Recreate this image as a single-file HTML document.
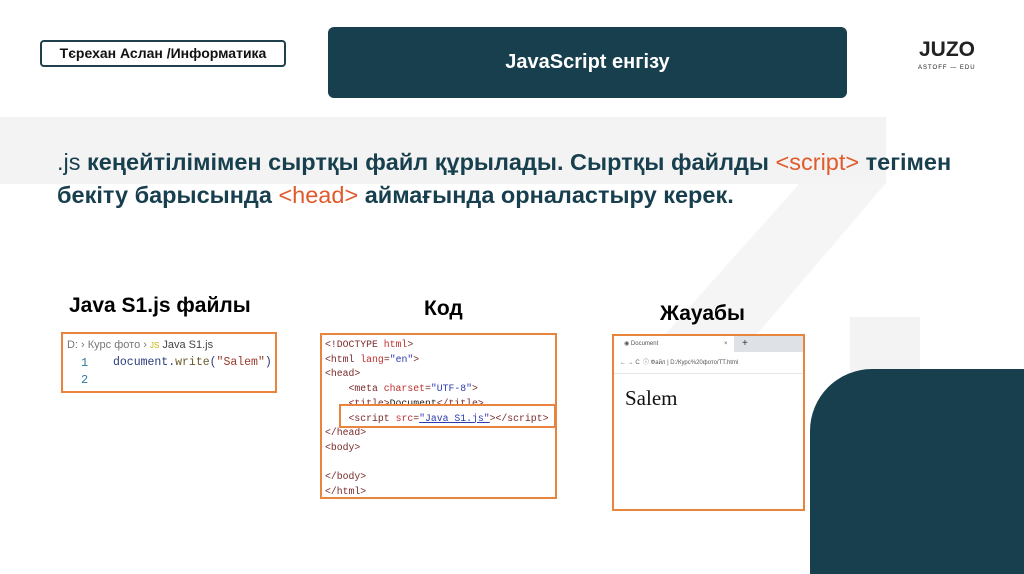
<!DOCTYPE html>
<html><head><meta charset="utf-8"><style>
body{margin:0;width:1024px;height:574px;position:relative;overflow:hidden;background:#fff;font-family:"Liberation Sans","DejaVu Sans",sans-serif}
.a{position:absolute}
.mono{font-family:"Liberation Mono","DejaVu Sans Mono",monospace}
</style></head><body>
<div class="a" style="left:0;top:117px;width:886px;height:67px;background:#f3f3f3"></div>
<svg class="a" style="left:0;top:0" width="1024" height="574"><polygon points="800,183 886,183 752,340 660,340" fill="#f5f5f5"/></svg>
<div class="a" style="left:850px;top:317px;width:70px;height:60px;background:#f3f3f3"></div>
<div class="a" style="left:810px;top:369px;width:214px;height:205px;background:#173f4e;border-top-left-radius:62px"></div>

<div class="a" style="left:40px;top:40px;width:246px;height:27px;border:2px solid #1f3f4c;border-radius:4px;box-sizing:border-box;font-size:14px;font-weight:bold;line-height:23px;text-align:center;color:#111">Тєрехан Аслан /Информатика</div>
<div class="a" style="left:328px;top:27px;width:519px;height:71px;background:#173f4e;border-radius:6px;color:#fff;font-weight:bold;font-size:20px;line-height:71px;text-align:center">JavaScript енгізу</div>
<div class="a" style="left:919px;top:38px;font-weight:bold;font-size:21px;letter-spacing:0px;color:#222">JUZO</div>
<div class="a" style="left:918px;top:65px;font-size:6px;color:#222;letter-spacing:1px">ASTOFF — EDU</div>

<div class="a" style="left:57px;top:146px;font-size:23.5px;line-height:33px;font-weight:bold;color:#173f4e;white-space:nowrap">
<span style="font-weight:normal">.js</span> кеңейтілімімен сыртқы файл құрылады. Сыртқы файлды <span style="color:#e05a2b;font-weight:normal">&lt;script&gt;</span> тегімен<br>бекіту барысында <span style="color:#e05a2b;font-weight:normal">&lt;head&gt;</span> аймағында орналастыру керек.</div>

<div class="a" style="left:69px;top:294px;font-size:21px;font-weight:bold;color:#000">Java S1.js файлы</div>
<div class="a" style="left:424px;top:297px;font-size:21px;font-weight:bold;color:#000">Код</div>
<div class="a" style="left:660px;top:302px;font-size:21px;font-weight:bold;color:#000">Жауабы</div>

<div class="a" style="left:61px;top:332px;width:216px;height:61px;border:2px solid #e8843e;box-sizing:border-box;font-size:11px;color:#777">
<div class="a" style="left:4px;top:5px">D: › Курс фото › <span style="color:#c9b400;font-size:8px">JS</span> <span style="color:#444">Java S1.js</span></div>
<div class="a mono" style="left:18px;top:22px;font-size:12px;color:#2a7a9a">1</div>
<div class="a mono" style="left:50px;top:22px;font-size:11.5px;color:#2a3a7a">document.<span style="color:#6a5a2a">write</span>(<span style="color:#9a3a2a">"Salem"</span>)</div>
<div class="a mono" style="left:18px;top:39px;font-size:12px;color:#2a7a9a">2</div>
</div>

<div class="a mono" style="left:320px;top:333px;width:237px;height:166px;border:2px solid #e8843e;box-sizing:border-box;font-size:9.8px;line-height:14.7px;color:#7a2a2a;padding:3px 0 0 3px;white-space:pre;overflow:hidden">&lt;!DOCTYPE <span style="color:#c03030">html</span>&gt;
&lt;html <span style="color:#c03030">lang</span>=<span style="color:#2a3ab0">"en"</span>&gt;
&lt;head&gt;
    &lt;meta <span style="color:#c03030">charset</span>=<span style="color:#2a3ab0">"UTF-8"</span>&gt;
    &lt;title&gt;<span style="color:#222">Document</span>&lt;/title&gt;
    &lt;script <span style="color:#c03030">src</span>=<span style="color:#2a3ab0;text-decoration:underline">"Java S1.js"</span>&gt;&lt;/script&gt;
&lt;/head&gt;
&lt;body&gt;

&lt;/body&gt;
&lt;/html&gt;</div>
<div class="a" style="left:339px;top:404px;width:217px;height:24px;border:2px solid #e8843e;box-sizing:border-box"></div>

<div class="a" style="left:612px;top:334px;width:193px;height:177px;border:2px solid #e8843e;box-sizing:border-box;background:#fff">
<div class="a" style="left:0;top:0;width:189px;height:16px;background:#dee1e6"></div>
<div class="a" style="left:0;top:0;width:120px;height:16px;background:#fff;font-size:6px;color:#555;line-height:16px;padding-left:10px;box-sizing:border-box">◉ Document<span style="position:absolute;left:110px">×</span></div>
<div class="a" style="left:128px;top:0;font-size:10px;line-height:16px;color:#333">+</div>
<div class="a" style="left:0;top:16px;width:189px;height:22px;border-bottom:1px solid #e5e5e5;font-size:6px;color:#555;line-height:22px;padding-left:6px;box-sizing:border-box">←  →  C  &nbsp;ⓘ Файл | D:/Курс%20фото/TT.html</div>
<div class="a" style="left:11px;top:50px;font-family:'Liberation Serif',serif;font-size:21px;color:#111">Salem</div>
</div>
</body></html>
